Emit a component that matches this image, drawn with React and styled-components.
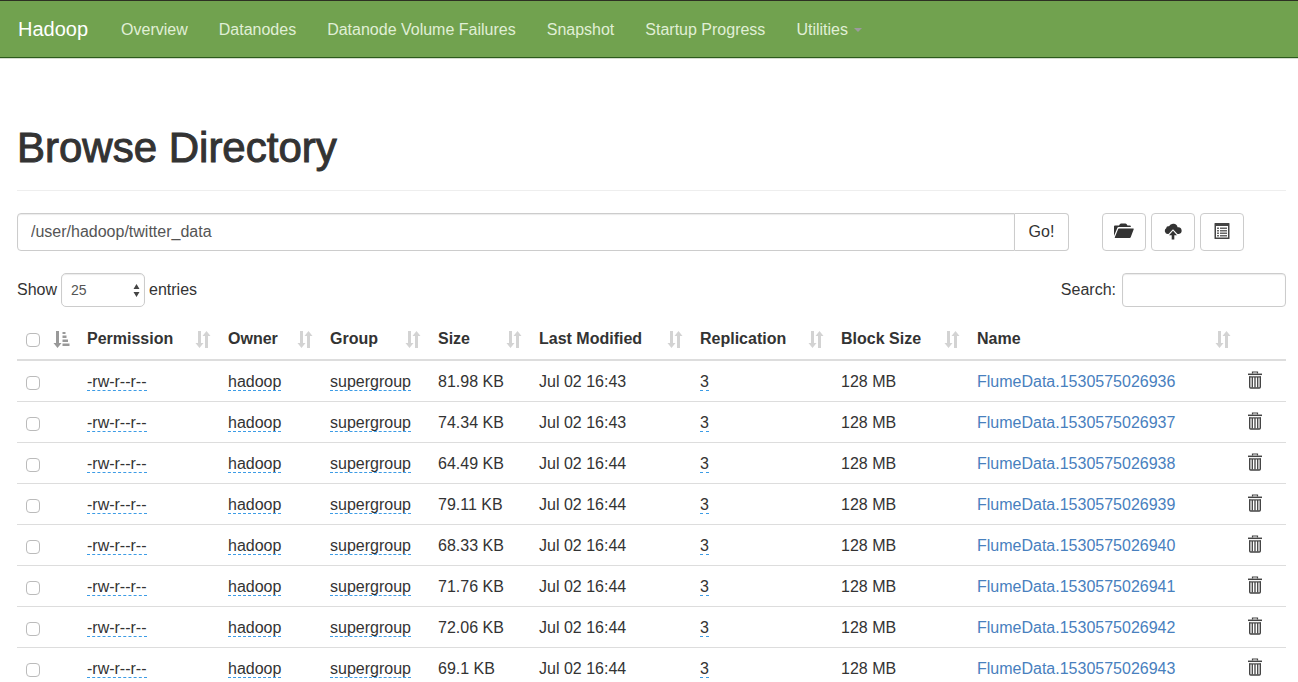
import React from "react";
import styled, { createGlobalStyle } from "styled-components";

const GlobalStyle = createGlobalStyle`
  *, *::before, *::after { box-sizing: border-box; }
  html { scrollbar-width: none; }
  body {
    margin: 0;
    background: #fff;
    color: #333;
    font: 16px/22px "Liberation Sans", Arial, Helvetica, sans-serif;
  }
  button, input, select { font: inherit; color: inherit; }
`;

const Navbar = styled.nav`
  display: flex;
  align-items: center;
  gap: 33px;
  height: 58px;
  padding: 0 18px;
  background: #71a24f;
  border-top: 1px solid #2d3023;
  border-bottom: 1px solid #2c5a1c;
  box-shadow: 0 1px 0 #d5dccf;
`;

const Brand = styled.a`
  font-size: 20px;
  color: #fff;
  text-decoration: none;
`;

const NavList = styled.ul`
  display: flex;
  gap: 31px;
  margin: 0;
  padding: 1px 0 0;
  list-style: none;
`;

const NavLink = styled.a`
  display: flex;
  align-items: center;
  gap: 6px;
  color: #e0efd6;
  white-space: nowrap;
  text-decoration: none;
`;

const Caret = styled.span`
  border: 4px solid transparent;
  border-top-color: #9d9a9f;
  border-bottom: 0;
`;

const Page = styled.main`
  padding: 66px 12px 0 17px;
`;

const Title = styled.h1`
  margin: 0 0 22px;
  padding-bottom: 18px;
  border-bottom: 1px solid #eee;
  font-size: 42px;
  line-height: 48px;
  font-weight: 400;
  -webkit-text-stroke: 1px #333;
`;

const Toolbar = styled.form`
  display: flex;
  gap: 33px;
  margin-bottom: 22px;
  padding-right: 42px;
`;

const PathGroup = styled.div`
  display: flex;
  flex: 1;
`;

const TextInput = styled.input`
  height: 34px;
  width: 164px;
  padding: 0 10px;
  border: 1px solid #ccc;
  border-radius: 4px;
  background: #fff;
  color: #555;
  box-shadow: inset 0 1px 1px rgba(0, 0, 0, 0.08);
`;

const PathInput = styled(TextInput)`
  flex: 1;
  height: 38px;
  padding: 0 13px;
  border-radius: 4px 0 0 4px;
`;

const Button = styled.button`
  display: flex;
  align-items: center;
  justify-content: center;
  width: ${(p) => p.$width}px;
  height: 38px;
  padding: 0;
  border: 1px solid #ccc;
  border-left-width: ${(p) => (p.$joined ? 0 : 1)}px;
  border-radius: ${(p) => (p.$joined ? "0 4px 4px 0" : "4px")};
  background: #fff;
`;

const ActionButton = styled(Button)`
  padding-bottom: 2px;
`;

const Actions = styled.div`
  display: flex;
  gap: 5px;
`;

const TableControls = styled.div`
  display: flex;
  justify-content: space-between;
  margin-bottom: 13px;
`;

const ControlLabel = styled.label`
  display: flex;
  align-items: center;
  gap: ${(p) => p.$gap}px;
`;

const SelectBox = styled.span`
  position: relative;
  display: block;
`;

const Select = styled.select`
  appearance: none;
  display: block;
  width: 84px;
  height: 34px;
  padding: 0 9px;
  border: 1px solid #ccc;
  border-radius: 5px;
  background: #fff;
  color: #555;
  font-size: 14px;
  box-shadow: inset 0 1px 1px rgba(0, 0, 0, 0.08);
`;

const SelectArrows = styled.svg`
  position: absolute;
  right: 5px;
  top: 11px;
  pointer-events: none;
`;

const Table = styled.table`
  width: 100%;
  table-layout: fixed;
  border-collapse: separate;
  border-spacing: 0;
`;

const Col = styled.col`
  width: ${(p) => (p.$width ? `${p.$width}px` : "auto")};
`;

const HeadCell = styled.th`
  padding: 8px 8px 9px 9px;
  border-bottom: 2px solid #ddd;
  text-align: left;
  font-weight: 700;
  white-space: nowrap;
`;

const HeadContent = styled.div`
  display: flex;
  align-items: center;
  justify-content: space-between;
`;

const Cell = styled.td`
  height: 41px;
  padding: 10px 9px 8px;
  border-bottom: 1px solid #ddd;
  white-space: nowrap;
`;

const Checkbox = styled.input`
  appearance: none;
  display: block;
  width: 14px;
  height: 14px;
  margin: 1px 0 0;
  border: 1px solid #bbb;
  border-radius: 4px;
  background: #fff;
`;

const Editable = styled.span`
  border-bottom: 1px dashed #3c9ce6;
`;

const FileLink = styled.a`
  color: #4880be;
  text-decoration: none;
`;

const IconButton = styled.button`
  display: block;
  padding: 0;
  border: 0;
  background: none;
  line-height: 0;
`;

const TrashButton = styled(IconButton)`
  margin-bottom: 4px;
`;

const SortIcon = () => (
  <svg width="16" height="17" viewBox="0 0 16 17" fill="#d3d3d3" aria-hidden="true">
    <path d="M3 0h3v12h2.5L4.5 17 .5 12H3zM10 17h3V5h2.5L11.5 0 7.5 5H10z" />
  </svg>
);

const SortedIcon = () => (
  <svg width="17" height="17" viewBox="0 0 17 17" fill="#999" aria-hidden="true">
    <path d="M3 0h3v12h2.500L4.500 17 .5 12H3zM9.500 1h3v2h-3zM9.500 4.500h4v2.500h-4zM9.500 8.500H15V11H9.500zM9.500 12.500h7V15h-7z" />
  </svg>
);

const FolderIcon = () => (
  <svg width="20" height="16" viewBox="0 0 20 16" fill="#333" aria-hidden="true">
    <path d="M0 13V3.500Q0 2.500 1 2.500H5L6 1Q6.500.500 7 .500h4.500q.500 0 1 .500l1 1.500H16q.800 0 .800.800V4H4.500q-.800 0-1.100.800z" />
    <path d="M5 5.500h14.200q.800 0 .5.700l-3 8q-.3.800-1 .800H1.200q-.700 0-.4-.800L4.200 6q.2-.500.8-.500z" />
  </svg>
);

const UploadIcon = () => (
  <svg width="18" height="17" viewBox="0 0 18 17" fill="#333" aria-hidden="true">
    <path d="M3.800 11A3.200 3.200 0 0 1 2.200 5.200 2.200 2.200 0 0 1 5 3.300 4.600 4.600 0 0 1 13.600 4.300 3.400 3.400 0 0 1 14.800 11H13.500L9 6.300 4.500 11z" />
    <path d="M9 7.800 13 12.200h-2.700v4.300H7.700v-4.300H5z" />
  </svg>
);

const ListIcon = () => (
  <svg width="16" height="17" viewBox="0 0 16 17" aria-hidden="true">
    <path fill="#444" fillRule="evenodd" d="M1 0h14q.500 0 .500.500v15q0 .500-.500.500H1Q.500 16 .500 15.500V.500Q.500 0 1 0zM2 3V14.500h12V3z" />
    <path fill="#666" d="M3 4.500h2V6H3zM6 4.500h7V6H6zM3 7h2v1.500H3zM6 7h7v1.500H6zM3 9.500h2V11H3zM6 9.500h7V11H6zM3 12h2v1.500H3zM6 12h7v1.500H6z" />
  </svg>
);

const TrashIcon = () => (
  <svg width="14" height="18" viewBox="0 0 14 18" fill="none" stroke="#444" aria-hidden="true">
    <path d="M4.500 2.500V1h5v1.500" strokeWidth="1.200" />
    <path d="M0 3.300h14" strokeWidth="1.500" />
    <path d="M1 5.900h12" strokeWidth="1.200" />
    <path d="M1.700 5.500V16q0 1 1 1h8.600q1 0 1-1V5.500" strokeWidth="1.400" />
    <path d="M4.300 6v10.500M7 6v10.500M9.700 6v10.500" strokeWidth="1.300" />
  </svg>
);

const navItems = [
  "Overview",
  "Datanodes",
  "Datanode Volume Failures",
  "Snapshot",
  "Startup Progress",
];

const columns = [
  { label: "Permission", width: 141 },
  { label: "Owner", width: 102 },
  { label: "Group", width: 108 },
  { label: "Size", width: 101 },
  { label: "Last Modified", width: 161 },
  { label: "Replication", width: 141 },
  { label: "Block Size", width: 136 },
  { label: "Name" },
];

const files = [
  { size: "81.98 KB", modified: "Jul 02 16:43", name: "FlumeData.1530575026936" },
  { size: "74.34 KB", modified: "Jul 02 16:43", name: "FlumeData.1530575026937" },
  { size: "64.49 KB", modified: "Jul 02 16:44", name: "FlumeData.1530575026938" },
  { size: "79.11 KB", modified: "Jul 02 16:44", name: "FlumeData.1530575026939" },
  { size: "68.33 KB", modified: "Jul 02 16:44", name: "FlumeData.1530575026940" },
  { size: "71.76 KB", modified: "Jul 02 16:44", name: "FlumeData.1530575026941" },
  { size: "72.06 KB", modified: "Jul 02 16:44", name: "FlumeData.1530575026942" },
  { size: "69.1 KB", modified: "Jul 02 16:44", name: "FlumeData.1530575026943" },
];

export default function App() {
  return (
    <>
      <GlobalStyle />
      <Navbar>
        <Brand href="#">Hadoop</Brand>
        <NavList>
          {navItems.map((item) => (
            <li key={item}>
              <NavLink href="#">{item}</NavLink>
            </li>
          ))}
          <li>
            <NavLink href="#">
              Utilities <Caret />
            </NavLink>
          </li>
        </NavList>
      </Navbar>

      <Page>
        <Title>Browse Directory</Title>

        <Toolbar onSubmit={(e) => e.preventDefault()}>
          <PathGroup>
            <PathInput aria-label="Directory" defaultValue="/user/hadoop/twitter_data" />
            <Button type="submit" $width={54} $joined>
              Go!
            </Button>
          </PathGroup>
          <Actions>
            <ActionButton type="button" $width={44} aria-label="Create directory">
              <FolderIcon />
            </ActionButton>
            <ActionButton type="button" $width={44} aria-label="Upload files">
              <UploadIcon />
            </ActionButton>
            <ActionButton type="button" $width={44} aria-label="Cut and paste">
              <ListIcon />
            </ActionButton>
          </Actions>
        </Toolbar>

        <TableControls>
          <ControlLabel $gap={4}>
            Show
            <SelectBox>
              <Select defaultValue="25">
                <option>10</option>
                <option>25</option>
                <option>50</option>
                <option>100</option>
              </Select>
              <SelectArrows width="7" height="13" viewBox="0 0 7 13" fill="#444" aria-hidden="true">
                <path d="M3.500 0 6.500 5H.500zM3.500 13 .500 8h6z" />
              </SelectArrows>
            </SelectBox>
            entries
          </ControlLabel>
          <ControlLabel $gap={6}>
            Search:
            <TextInput type="search" />
          </ControlLabel>
        </TableControls>

        <Table>
          <colgroup>
            <Col $width={61} />
            {columns.map((c) => (
              <Col key={c.label} $width={c.width} />
            ))}
            <Col $width={47} />
          </colgroup>
          <thead>
            <tr>
              <HeadCell>
                <HeadContent>
                  <Checkbox type="checkbox" aria-label="Select all" />
                  <IconButton type="button" aria-label="Sort by selection">
                    <SortedIcon />
                  </IconButton>
                </HeadContent>
              </HeadCell>
              {columns.map((c) => (
                <HeadCell key={c.label}>
                  <HeadContent>
                    {c.label}
                    <IconButton type="button" aria-label={`Sort by ${c.label}`}>
                      <SortIcon />
                    </IconButton>
                  </HeadContent>
                </HeadCell>
              ))}
              <HeadCell />
            </tr>
          </thead>
          <tbody>
            {files.map((f) => (
              <tr key={f.name}>
                <Cell>
                  <Checkbox type="checkbox" aria-label={`Select ${f.name}`} />
                </Cell>
                <Cell>
                  <Editable>-rw-r--r--</Editable>
                </Cell>
                <Cell>
                  <Editable>hadoop</Editable>
                </Cell>
                <Cell>
                  <Editable>supergroup</Editable>
                </Cell>
                <Cell>{f.size}</Cell>
                <Cell>{f.modified}</Cell>
                <Cell>
                  <Editable>3</Editable>
                </Cell>
                <Cell>128 MB</Cell>
                <Cell>
                  <FileLink href="#">{f.name}</FileLink>
                </Cell>
                <Cell>
                  <TrashButton type="button" aria-label={`Delete ${f.name}`}>
                    <TrashIcon />
                  </TrashButton>
                </Cell>
              </tr>
            ))}
          </tbody>
        </Table>
      </Page>
    </>
  );
}
